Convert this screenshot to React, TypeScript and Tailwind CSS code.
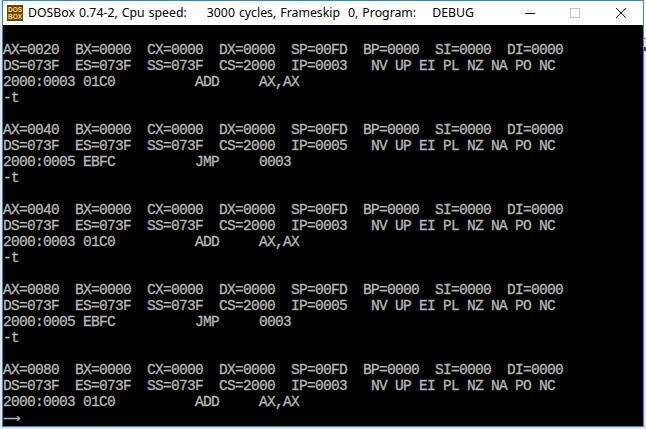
const REGS = (ax: string) =>
  `AX=${ax}  BX=0000  CX=0000  DX=0000  SP=00FD  BP=0000  SI=0000  DI=0000`;
const SEGS = (ip: string) =>
  `DS=073F  ES=073F  SS=073F  CS=2000  IP=${ip}   NV UP EI PL NZ NA PO NC`;
const ADD = "2000:0003 01C0          ADD     AX,AX";
const JMP = "2000:0005 EBFC          JMP     0003";

const steps = [
  { ax: "0020", ip: "0003", op: ADD },
  { ax: "0040", ip: "0005", op: JMP },
  { ax: "0040", ip: "0003", op: ADD },
  { ax: "0080", ip: "0005", op: JMP },
  { ax: "0080", ip: "0003", op: ADD },
];

function DosIcon() {
  return (
    <svg width="16" height="16" viewBox="0 0 16 16" className="shrink-0">
      <rect width="16" height="16" fill="#6b4210" />
      <text x="8" y="7" textAnchor="middle" fontSize="6.5" fontWeight="700" fontFamily="Liberation Sans, sans-serif" fill="#ffe040">
        DOS
      </text>
      <text x="8" y="14" textAnchor="middle" fontSize="6.5" fontWeight="700" fontFamily="Liberation Sans, sans-serif" fill="#ffe040">
        BOX
      </text>
    </svg>
  );
}

export default function App() {
  return (
    <div className="flex h-[429px] w-[646px] overflow-hidden bg-[#e4e4e4] pl-[2px]">
      <div className="flex h-[427px] w-[642px] shrink-0 flex-col border border-[#2a8ad4]">
        <div className="flex h-[24px] shrink-0 items-center bg-white pl-[4px]">
          <DosIcon />
          <span className="ml-[5px] whitespace-pre font-['Noto_Sans',sans-serif] text-[12.3px] text-black [word-spacing:0.8px]">
            {"DOSBox 0.74-2, Cpu speed:     3000 cycles, Frameskip  0, Program:    DEBUG"}
          </span>
          <div className="ml-auto flex items-center">
            <div className="h-px w-[10px] bg-black" />
            <div className="ml-[35px] h-[10px] w-[10px] border border-[#c4c4c4]" />
            <svg width="10" height="10" viewBox="0 0 10 10" className="ml-[36px] mr-[17px]">
              <path d="M0 0 L10 10 M10 0 L0 10" stroke="#111" strokeWidth="1" />
            </svg>
          </div>
        </div>
        <pre className="flex-1 bg-black pt-[1px] font-['Liberation_Mono',monospace] text-[14.5px] leading-[16px] tracking-[-0.7px] text-[#b4b4b4] [-webkit-text-stroke:0.35px_#b4b4b4]">
          {"\n"}
          {steps.map((s) => `${REGS(s.ax)}\n${SEGS(s.ip)}\n${s.op}\n`).join("-t\n\n")}
          <span className="font-['DejaVu_Sans',sans-serif] text-[12px] tracking-normal">⟶</span>
        </pre>
      </div>
      <div className="flex w-[2px] flex-col">
        <div className="h-[38px] bg-white" />
        <div className="h-px bg-[#2a8ad4]" />
        <div className="mt-[8px] h-[4px] bg-[#444444]" />
      </div>
    </div>
  );
}
